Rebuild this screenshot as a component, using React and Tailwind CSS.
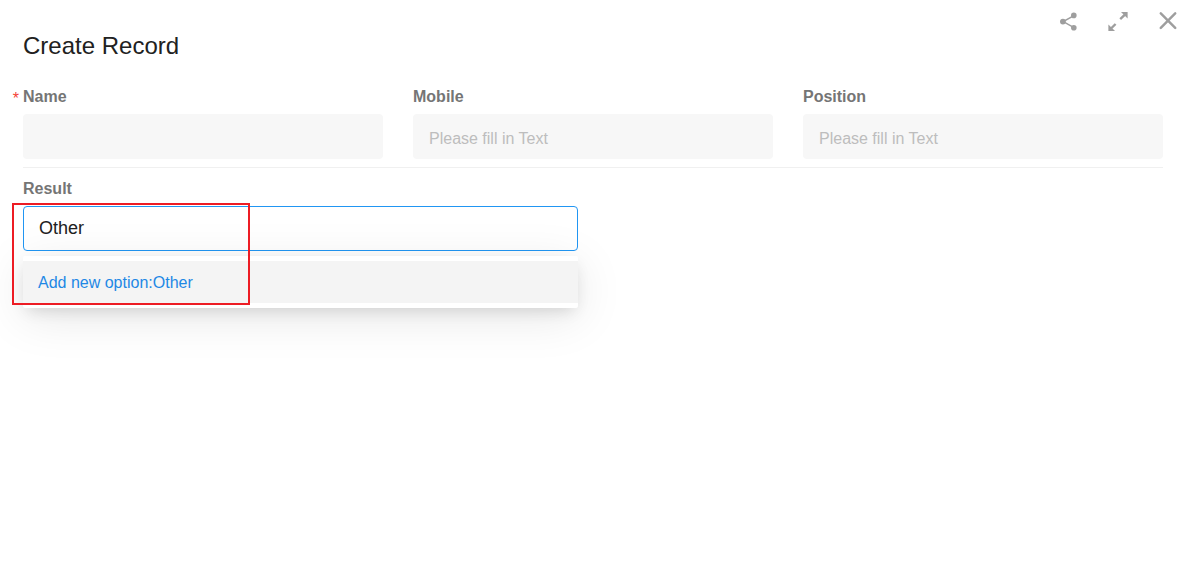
function ShareIcon() {
  return (
    <svg width="18" height="20" viewBox="0 0 18 20" fill="#9e9e9e" aria-hidden="true">
      <path d="M15 3.6 4.2 9.6 15 15.6" fill="none" stroke="#9e9e9e" strokeWidth="1.5" />
      <circle cx="3.9" cy="9.6" r="2.9" />
      <circle cx="14.8" cy="3.4" r="2.8" />
      <circle cx="14.8" cy="15.8" r="2.8" />
    </svg>
  );
}

function ExpandIcon() {
  return (
    <svg width="20" height="20" viewBox="0 0 20 20" fill="#9e9e9e" aria-hidden="true">
      <path d="M13 0h6.6v6.6z" />
      <path d="M0.4 12.4v6.6h6.6z" />
      <path d="M12.2 7.2 17.5 2.1M2.5 17 7.6 12" fill="none" stroke="#9e9e9e" strokeWidth="2.4" />
    </svg>
  );
}

function CloseIcon() {
  return (
    <svg width="18" height="18" viewBox="0 0 18 18" aria-hidden="true">
      <path d="M1.8 1.3 16.2 15.9M16.2 1.3 1.8 15.9" fill="none" stroke="#9e9e9e" strokeWidth="2.4" strokeLinecap="round" />
    </svg>
  );
}

function Field({ id, label, placeholder, required }) {
  return (
    <div className="flex flex-col gap-[5px]">
      <label htmlFor={id} className="relative text-base font-bold text-[#757575]">
        {required && <span className="absolute right-full mr-1 text-base leading-7 font-normal text-[#f44336]">*</span>}
        {label}
      </label>
      <input
        id={id}
        type="text"
        required={required}
        placeholder={placeholder}
        className="h-[45px] w-full rounded bg-[#f7f7f7] px-4 pt-1 text-base text-[#212121] outline-none placeholder:text-[#bdbdbd]"
      />
    </div>
  );
}

export default function App() {
  return (
    <main className="min-h-screen bg-white pb-10 font-['Liberation_Sans',Arial,sans-serif]">
      <header className="flex items-start justify-between pr-0.5 pl-[23px]">
        <h1 className="pt-8 text-2xl leading-7 text-[#212121]">Create Record</h1>
        <div className="flex items-start gap-[31px] pt-3">
          <button type="button" aria-label="Share"><ShareIcon /></button>
          <button type="button" aria-label="Expand"><ExpandIcon /></button>
          <button type="button" aria-label="Close"><CloseIcon /></button>
        </div>
      </header>

      <form className="pt-[25px] pr-4 pl-[23px]">
        <div className="grid grid-cols-3 gap-[30px] border-b border-[#f0f0f0] pb-2">
          <Field id="name" label="Name" required />
          <Field id="mobile" label="Mobile" placeholder="Please fill in Text" />
          <Field id="position" label="Position" placeholder="Please fill in Text" />
        </div>

        <div className="grid grid-cols-2 gap-[30px] pt-[9px]">
          <div className="flex flex-col gap-[5px]">
            <label htmlFor="result" className="text-base font-bold text-[#757575]">Result</label>
            <div className="relative">
              <input
                id="result"
                type="text"
                role="combobox"
                aria-expanded="true"
                aria-controls="result-options"
                defaultValue="Other"
                className="block h-[45px] w-full rounded border border-[#2196f3] bg-transparent px-[15px] text-lg text-[#212121] outline-none"
              />
              <ul
                id="result-options"
                role="listbox"
                className="absolute top-full mt-[5px] w-full rounded-xs bg-white py-[5px] shadow-[0_9px_48px_rgba(0,0,0,0.10),0_6px_16px_-4px_rgba(0,0,0,0.14)]"
              >
                <li role="option" aria-selected="true" className="bg-[#f4f4f4] px-[15px] pt-2.5 pb-2 text-base text-[#1e88e5]">
                  Add new option:Other
                </li>
              </ul>
              <div className="pointer-events-none absolute -top-[3px] -left-[11px] h-[102px] w-[238px] border-2 border-[#ed1c24]" />
            </div>
          </div>
        </div>
      </form>
    </main>
  );
}
